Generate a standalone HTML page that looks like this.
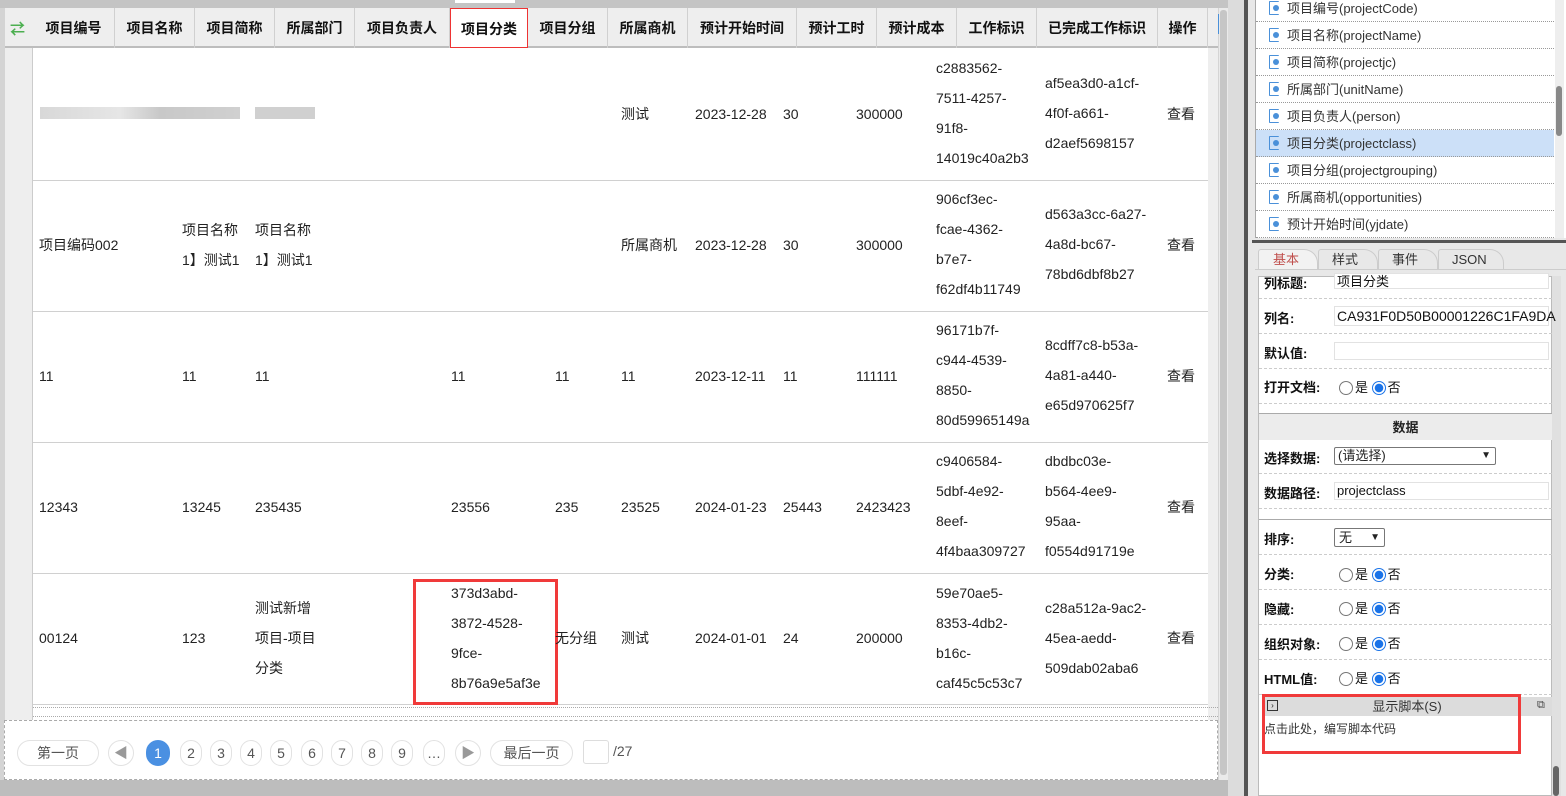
<!DOCTYPE html>
<html><head><meta charset="utf-8"><style>
*{margin:0;padding:0;box-sizing:border-box}
body{width:1566px;height:796px;overflow:hidden;background:#d4d4d4;font-family:"Liberation Sans","Noto Sans CJK SC",sans-serif;font-size:14px;color:#222;position:relative}
.a{position:absolute}
.c{position:absolute;line-height:30px;white-space:nowrap;font-size:14px;color:#222}
.h{position:absolute;top:8px;height:40px;line-height:40px;font-weight:bold;font-size:14px;text-align:center;border-right:1px solid #d0d0d0;color:#111}
.rl{position:absolute;left:33px;width:1175px;height:1px;background:#d0d0d0}
.pb{position:absolute;top:740px;height:26px;border:1px solid #e2e2e2;border-radius:13px;text-align:center;line-height:24px;color:#555;font-size:14px;background:#fff}
.li{position:absolute;left:1256px;width:298px;height:27px;border-bottom:1px dotted #999;font-size:13px;color:#333;line-height:27px;padding-left:31px}
.li i{position:absolute;left:13px;top:6px;width:10px;height:14px;border:1.5px solid #4a90d9;border-right:none;border-radius:1px}
.li i:after{content:"";position:absolute;left:3px;top:3px;width:6px;height:6px;border-radius:50%;background:#4a90d9}
.fr{position:absolute;left:1259px;width:293px;border-bottom:1px dashed #ccc}
.lb{position:absolute;left:1264px;font-size:13px;font-weight:bold;color:#111}
.inp{position:absolute;left:1334px;width:215px;height:18px;border:1px solid #e2e2e2;font-size:13px;line-height:16px;padding-left:2px;color:#111;background:#fff}
.rad{position:absolute;font-size:13px;color:#111}
.rad b{display:inline-block;width:14px;height:14px;border:1px solid #777;border-radius:50%;vertical-align:-3px;margin-right:2px;background:#fff}
.rad b.on{border:1px solid #1a73e8;background:radial-gradient(circle,#1a73e8 4px,#fff 4.5px)}
</style></head><body>
<div class="a" style="left:0;top:0;width:1230px;height:8px;background:#c4c4c4"></div>
<div class="a" style="left:5px;top:8px;width:1213px;height:712px;background:#fff"></div>
<div class="a" style="left:5px;top:8px;width:1213px;height:40px;background:#eeeeee;border-bottom:2px solid #bdbdbd"></div>
<div class="a" style="left:5px;top:48px;width:28px;height:672px;background:#eeeeee;border-right:1px solid #ccc"></div>
<div class="a" style="left:10px;top:18px;font-size:15px;color:#4caf50;font-weight:bold">⇄</div>
<div class="a" style="left:455px;top:0;width:60px;height:3px;background:#fff"></div>
<div class="h" style="left:33px;width:82px">项目编号</div>
<div class="h" style="left:115px;width:80px">项目名称</div>
<div class="h" style="left:195px;width:80px">项目简称</div>
<div class="h" style="left:275px;width:80px">所属部门</div>
<div class="h" style="left:355px;width:95px">项目负责人</div>
<div class="h" style="left:450px;width:78px;background:#fff;border:1px solid #e33;">项目分类</div>
<div class="h" style="left:528px;width:80px">项目分组</div>
<div class="h" style="left:608px;width:80px">所属商机</div>
<div class="h" style="left:688px;width:109px">预计开始时间</div>
<div class="h" style="left:797px;width:80px">预计工时</div>
<div class="h" style="left:877px;width:80px">预计成本</div>
<div class="h" style="left:957px;width:80px">工作标识</div>
<div class="h" style="left:1037px;width:121px">已完成工作标识</div>
<div class="h" style="left:1158px;width:50px">操作</div>
<div class="a" style="left:1218px;top:14px;width:4px;height:20px;border:1px solid #4a90d9;border-right:none"></div>
<div class="a" style="left:1208px;top:48px;width:10px;height:672px;background:#eee"></div>
<div class="rl" style="top:180px"></div><div class="rl" style="top:311px"></div><div class="rl" style="top:442px"></div><div class="rl" style="top:573px"></div><div class="rl" style="top:704px"></div>
<div class="a" style="left:33px;top:707px;width:1185px;border-top:1px dotted #aaa"></div>
<div class="a" style="left:33px;top:716px;width:1185px;border-top:1px dotted #aaa"></div>
<div class="a" style="left:40px;top:107px;width:200px;height:12px;background:linear-gradient(90deg,#d8d8d8,#e6e6e6 40%,#c8c8c8 60%,#d0d0d0)"></div>
<div class="a" style="left:255px;top:107px;width:60px;height:12px;background:#d0d0d0"></div>
<div class="c" style="left:621px;top:99px">测试</div>
<div class="c" style="left:695px;top:99px">2023-12-28</div>
<div class="c" style="left:783px;top:99px">30</div>
<div class="c" style="left:856px;top:99px">300000</div>
<div class="c" style="left:936px;top:53px">c2883562-<br>7511-4257-<br>91f8-<br>14019c40a2b3</div>
<div class="c" style="left:1045px;top:68px">af5ea3d0-a1cf-<br>4f0f-a661-<br>d2aef5698157</div>
<div class="c" style="left:1167px;top:99px">查看</div>
<div class="c" style="left:39px;top:230px">项目编码002</div>
<div class="c" style="left:182px;top:215px">项目名称<br>1】测试1</div>
<div class="c" style="left:255px;top:215px">项目名称<br>1】测试1</div>
<div class="c" style="left:621px;top:230px">所属商机</div>
<div class="c" style="left:695px;top:230px">2023-12-28</div>
<div class="c" style="left:783px;top:230px">30</div>
<div class="c" style="left:856px;top:230px">300000</div>
<div class="c" style="left:936px;top:184px">906cf3ec-<br>fcae-4362-<br>b7e7-<br>f62df4b11749</div>
<div class="c" style="left:1045px;top:199px">d563a3cc-6a27-<br>4a8d-bc67-<br>78bd6dbf8b27</div>
<div class="c" style="left:1167px;top:230px">查看</div>
<div class="c" style="left:39px;top:361px">11</div>
<div class="c" style="left:182px;top:361px">11</div>
<div class="c" style="left:255px;top:361px">11</div>
<div class="c" style="left:451px;top:361px">11</div>
<div class="c" style="left:555px;top:361px">11</div>
<div class="c" style="left:621px;top:361px">11</div>
<div class="c" style="left:695px;top:361px">2023-12-11</div>
<div class="c" style="left:783px;top:361px">11</div>
<div class="c" style="left:856px;top:361px">111111</div>
<div class="c" style="left:936px;top:315px">96171b7f-<br>c944-4539-<br>8850-<br>80d59965149a</div>
<div class="c" style="left:1045px;top:330px">8cdff7c8-b53a-<br>4a81-a440-<br>e65d970625f7</div>
<div class="c" style="left:1167px;top:361px">查看</div>
<div class="c" style="left:39px;top:492px">12343</div>
<div class="c" style="left:182px;top:492px">13245</div>
<div class="c" style="left:255px;top:492px">235435</div>
<div class="c" style="left:451px;top:492px">23556</div>
<div class="c" style="left:555px;top:492px">235</div>
<div class="c" style="left:621px;top:492px">23525</div>
<div class="c" style="left:695px;top:492px">2024-01-23</div>
<div class="c" style="left:783px;top:492px">25443</div>
<div class="c" style="left:856px;top:492px">2423423</div>
<div class="c" style="left:936px;top:446px">c9406584-<br>5dbf-4e92-<br>8eef-<br>4f4baa309727</div>
<div class="c" style="left:1045px;top:446px">dbdbc03e-<br>b564-4ee9-<br>95aa-<br>f0554d91719e</div>
<div class="c" style="left:1167px;top:492px">查看</div>
<div class="c" style="left:39px;top:623px">00124</div>
<div class="c" style="left:182px;top:623px">123</div>
<div class="c" style="left:255px;top:593px">测试新增<br>项目-项目<br>分类</div>
<div class="c" style="left:451px;top:578px">373d3abd-<br>3872-4528-<br>9fce-<br>8b76a9e5af3e</div>
<div class="a" style="left:413px;top:579px;width:145px;height:126px;border:3px solid #f03a3a"></div>
<div class="c" style="left:555px;top:623px">无分组</div>
<div class="c" style="left:621px;top:623px">测试</div>
<div class="c" style="left:695px;top:623px">2024-01-01</div>
<div class="c" style="left:783px;top:623px">24</div>
<div class="c" style="left:856px;top:623px">200000</div>
<div class="c" style="left:936px;top:578px">59e70ae5-<br>8353-4db2-<br>b16c-<br>caf45c5c53c7</div>
<div class="c" style="left:1045px;top:593px">c28a512a-9ac2-<br>45ea-aedd-<br>509dab02aba6</div>
<div class="c" style="left:1167px;top:623px">查看</div>
<div class="a" style="left:4px;top:720px;width:1214px;height:60px;background:#fff;border:1px dashed #aaa"></div>
<div class="a" style="left:0;top:780px;width:1228px;height:16px;background:#bdbdbd"></div>
<div class="pb" style="left:17px;width:82px">第一页</div>
<div class="pb" style="left:108px;width:26px;color:#999">◀</div>
<div class="pb" style="left:146px;width:24px;background:#4a90e2;border-color:#4a90e2;color:#fff">1</div>
<div class="pb" style="left:180px;width:22px">2</div>
<div class="pb" style="left:210px;width:22px">3</div>
<div class="pb" style="left:240px;width:22px">4</div>
<div class="pb" style="left:270px;width:22px">5</div>
<div class="pb" style="left:301px;width:22px">6</div>
<div class="pb" style="left:331px;width:22px">7</div>
<div class="pb" style="left:361px;width:22px">8</div>
<div class="pb" style="left:391px;width:22px">9</div>
<div class="pb" style="left:423px;width:22px">…</div>
<div class="pb" style="left:455px;width:26px;color:#999">▶</div>
<div class="pb" style="left:490px;width:83px">最后一页</div>
<div class="a" style="left:583px;top:740px;width:26px;height:24px;border:1px solid #ddd;border-radius:3px;background:#fff"></div>
<div class="a" style="left:613px;top:743px;color:#555">/27</div>
<div class="a" style="left:1219px;top:8px;width:9px;height:772px;background:#eaeaea"></div>
<div class="a" style="left:1220px;top:10px;width:7px;height:765px;background:#c6c6c6;border-radius:3px"></div>
<div class="a" style="left:1228px;top:0;width:16px;height:796px;background:#dcdcdc"></div>
<div class="a" style="left:1244px;top:0;width:4px;height:796px;background:#555"></div>
<div class="a" style="left:1248px;top:0;width:318px;height:796px;background:#e8e8e8"></div>
<div class="a" style="left:1255px;top:0;width:311px;height:238px;background:#fff;border-left:1px solid #aaa"></div>
<div class="li" style="top:-5px"><i></i>项目编号(projectCode)</div>
<div class="li" style="top:22px"><i></i>项目名称(projectName)</div>
<div class="li" style="top:49px"><i></i>项目简称(projectjc)</div>
<div class="li" style="top:76px"><i></i>所属部门(unitName)</div>
<div class="li" style="top:103px"><i></i>项目负责人(person)</div>
<div class="li" style="top:130px;background:#cce0f8"><i></i>项目分类(projectclass)</div>
<div class="li" style="top:157px"><i></i>项目分组(projectgrouping)</div>
<div class="li" style="top:184px"><i></i>所属商机(opportunities)</div>
<div class="li" style="top:211px"><i></i>预计开始时间(yjdate)</div>
<div class="a" style="left:1555px;top:0;width:9px;height:238px;background:#eee"></div>
<div class="a" style="left:1556px;top:86px;width:6px;height:50px;background:#888;border-radius:3px"></div>
<div class="a" style="left:1252px;top:240px;width:314px;height:3px;background:#555"></div>
<div class="a" style="left:1258px;top:249px;width:60px;height:20px;border:1px solid #ccc;border-bottom:none;border-radius:3px 14px 0 0;background:#f2f2f2;color:#c0504d;font-size:13px;line-height:20px;padding-left:14px">基本</div>
<div class="a" style="left:1318px;top:249px;width:60px;height:20px;border:1px solid #ccc;border-bottom:none;border-radius:3px 14px 0 0;font-size:13px;line-height:20px;padding-left:13px;color:#333">样式</div>
<div class="a" style="left:1378px;top:249px;width:60px;height:20px;border:1px solid #ccc;border-bottom:none;border-radius:3px 14px 0 0;font-size:13px;line-height:20px;padding-left:13px;color:#333">事件</div>
<div class="a" style="left:1438px;top:249px;width:66px;height:20px;border:1px solid #ccc;border-bottom:none;border-radius:3px 14px 0 0;font-size:13px;line-height:20px;padding-left:13px;color:#333">JSON</div>
<div class="a" style="left:1255px;top:269px;width:311px;height:1px;background:#ccc"></div>
<div class="a" style="left:1258px;top:276px;width:294px;height:520px;background:#fff;border:1px solid #bbb"></div>
<div class="a" style="left:1552px;top:276px;width:9px;height:520px;background:#e0e0e0"></div>
<div class="a" style="left:1553px;top:766px;width:6px;height:30px;background:#666;border-radius:3px"></div>
<div class="lb" style="top:273px">列标题:</div><div class="inp" style="left:1334px;top:273px;height:16px">项目分类</div>
<div class="fr" style="top:298px"></div>
<div class="lb" style="top:308px">列名:</div><div class="inp" style="top:306px;height:20px;line-height:18px;font-size:14px">CA931F0D50B00001226C1FA9DA</div>
<div class="fr" style="top:333px"></div>
<div class="lb" style="top:343px">默认值:</div><div class="inp" style="top:342px"></div>
<div class="fr" style="top:368px"></div>
<div class="lb" style="top:377px">打开文档:</div><div class="rad" style="left:1339px;top:377px"><b></b>是 <b class="on"></b>否</div>
<div class="fr" style="top:403px"></div>
<div class="a" style="left:1259px;top:413px;width:293px;height:27px;background:#ececec;border-top:1px solid #aaa;text-align:center;line-height:27px;font-size:13px;font-weight:bold">数据</div>
<div class="lb" style="top:448px">选择数据:</div>
<div class="a" style="left:1334px;top:447px;width:162px;height:18px;border:1px solid #777;border-radius:2px;font-size:13px;line-height:16px;padding-left:3px">(请选择)<span style="position:absolute;right:4px;font-size:10px">▼</span></div>
<div class="fr" style="top:473px"></div>
<div class="lb" style="top:483px">数据路径:</div><div class="inp" style="top:482px">projectclass</div>
<div class="fr" style="top:508px"></div>
<div class="a" style="left:1259px;top:519px;width:293px;height:1px;background:#aaa"></div>
<div class="lb" style="top:529px">排序:</div>
<div class="a" style="left:1334px;top:528px;width:51px;height:19px;border:1px solid #777;border-radius:2px;font-size:13px;line-height:17px;padding-left:4px">无<span style="position:absolute;right:4px;font-size:10px">▼</span></div>
<div class="fr" style="top:554px"></div>
<div class="lb" style="top:564px">分类:</div><div class="rad" style="left:1339px;top:564px"><b></b>是 <b class="on"></b>否</div>
<div class="fr" style="top:589px"></div>
<div class="lb" style="top:599px">隐藏:</div><div class="rad" style="left:1339px;top:598px"><b></b>是 <b class="on"></b>否</div>
<div class="fr" style="top:624px"></div>
<div class="lb" style="top:634px">组织对象:</div><div class="rad" style="left:1339px;top:633px"><b></b>是 <b class="on"></b>否</div>
<div class="fr" style="top:659px"></div>
<div class="lb" style="top:669px">HTML值:</div><div class="rad" style="left:1339px;top:668px"><b></b>是 <b class="on"></b>否</div>
<div class="fr" style="top:694px"></div>
<div class="a" style="left:1262px;top:697px;width:290px;height:19px;background:#dcdcdc;text-align:center;font-size:13px;line-height:19px;color:#333">显示脚本(S)</div>
<div class="a" style="left:1267px;top:700px;width:11px;height:11px;border:1px solid #333;font-size:8px;line-height:9px;text-align:center">›</div>
<div class="a" style="left:1537px;top:699px;font-size:11px;color:#444">⧉</div>
<div class="a" style="left:1264px;top:720px;font-size:12px;color:#333">点击此处，编写脚本代码</div>
<div class="a" style="left:1262px;top:694px;width:259px;height:60px;border:3px solid #f03a3a"></div>
</body></html>
